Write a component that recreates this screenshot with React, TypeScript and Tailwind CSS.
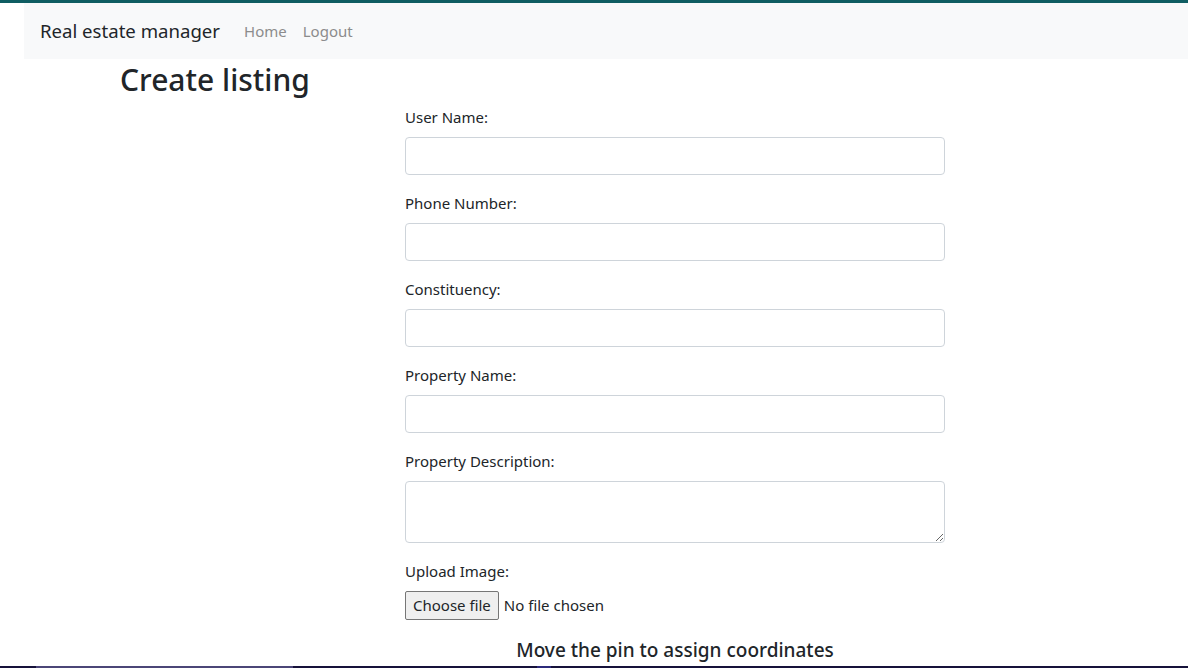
import { useState } from "react";

const FIELDS = [
  { label: "User Name:", name: "username" },
  { label: "Phone Number:", name: "phone" },
  { label: "Constituency:", name: "constituency" },
  { label: "Property Name:", name: "property" },
];

const Navbar = () => {
  return (
    <nav className="ml-[24px] flex h-[56px] items-center bg-[#f8f9fa] px-4">
      <span className="mr-4 text-[18.6px] text-[#212529]">Real estate manager</span>
      <a className="px-2 text-[15px] text-[#8c8c8c]" href="#">
        Home
      </a>
      <a className="px-2 text-[15px] text-[#8c8c8c]" href="#">
        Logout
      </a>
    </nav>
  );
};

export default function App() {
  const [values, setValues] = useState<Record<string, string>>({});

  return (
    <div
      className="flex h-[668px] flex-col overflow-hidden bg-white text-[#212529]"
      style={{ fontFamily: '"Noto Sans", "Open Sans", sans-serif' }}
    >
      <div className="h-[3px] bg-[#0f5d62]" />
      <Navbar />

      <main className="flex-1 overflow-hidden">
        <h2 className="ml-[120px] text-[30px] leading-[42px] font-medium">Create listing</h2>

        {/* 폼 */}
        <form className="ml-[405px] mt-1 w-[540px]">
          {FIELDS.map(field => (
            <div key={field.name} className="mb-4">
              <label className="mb-2 block text-[15px] leading-6">{field.label}</label>
              <input
                className="block h-[38px] w-full rounded-[4px] border border-[#ced4da] px-3"
                value={values[field.name] ?? ""}
                onChange={e => setValues(pre => ({ ...pre, [field.name]: e.target.value }))}
              />
            </div>
          ))}

          <div className="mb-4">
            <label className="mb-2 block text-[15px] leading-6">Property Description:</label>
            <textarea className="block h-[62px] w-full rounded-[4px] border border-[#ced4da] px-3" />
          </div>

          <div>
            <label className="mb-2 block text-[15px] leading-6">Upload Image:</label>
            <div className="flex items-center gap-[5px]">
              <button
                type="button"
                className="h-[29px] rounded-[2px] border border-[#767676] bg-[#efefef] px-[7px] text-[15px]"
              >
                Choose file
              </button>
              <span className="text-[15px]">No file chosen</span>
            </div>
          </div>

          <h5 className="mt-[18px] text-center text-[19px] font-medium leading-6">
            Move the pin to assign coordinates
          </h5>
        </form>
      </main>

      <div className="flex h-[2px] bg-[#16123a]">
        <div className="w-[36px]" />
        <div className="w-[257px] bg-[#4b4677]" />
        <div className="w-[244px]" />
        <div className="w-[14px] bg-[#2c2a7a]" />
      </div>
    </div>
  );
}
